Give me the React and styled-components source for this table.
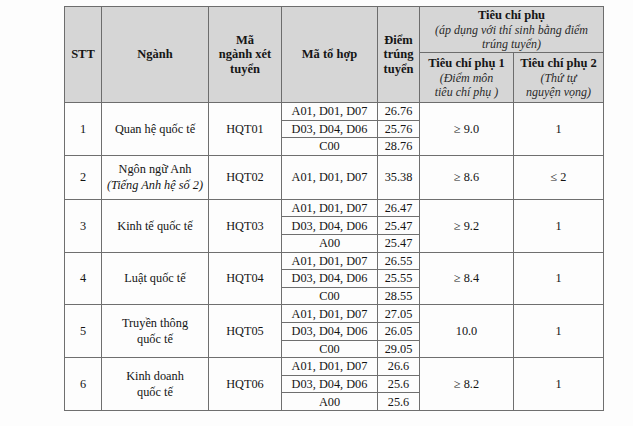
import React from 'react'
import styled, { createGlobalStyle } from 'styled-components'

const GlobalStyle = createGlobalStyle`
  body {
    margin: 0;
    background: #ffffff;
    font-family: "Liberation Serif", "Times New Roman", serif;
    color: #141414;
  }
`

const Page = styled.div`
  width: 633px;
  height: 426px;
  padding: 6px 0 0 64px;
  box-sizing: border-box;
  background: #fdfdfd;
`

const Table = styled.table`
  border-collapse: collapse;
  table-layout: fixed;
  width: 540px;
  border: 1px solid #777;
`

const HeadCell = styled.th`
  background: #d6d6d6;
  border: 1px solid #6d6d6d;
  font-size: 12.5px;
  font-weight: bold;
  line-height: 14.5px;
  text-align: center;
  vertical-align: middle;
  padding: 0 2px;
  color: #151515;
`

const Note = styled.span`
  display: block;
  font-weight: normal;
  font-style: italic;
  font-size: 12px;
  line-height: 14px;
  color: #2a2a2a;
`

const Cell = styled.td`
  border: 1px solid #6f6f6f;
  font-size: 12.3px;
  line-height: 16px;
  text-align: center;
  vertical-align: middle;
  padding: 0 2px;
  white-space: nowrap;
`

const Row = styled.tr`
  height: ${p => p.$h}px;
`

const Italic = styled.span`
  font-style: italic;
`

const widths = [37, 107, 73, 96, 42, 94, 90]

const groups = [
  {
    stt: '1', name: ['Quan hệ quốc tế'], code: 'HQT01', tc1: '≥ 9.0', tc2: '1',
    subs: [['A01, D01, D07', '26.76'], ['D03, D04, D06', '25.76'], ['C00', '28.76']],
  },
  {
    stt: '2', name: ['Ngôn ngữ Anh'], sub: '(Tiếng Anh hệ số 2)', code: 'HQT02', tc1: '≥ 8.6', tc2: '≤ 2',
    subs: [['A01, D01, D07', '35.38']],
  },
  {
    stt: '3', name: ['Kinh tế quốc tế'], code: 'HQT03', tc1: '≥ 9.2', tc2: '1',
    subs: [['A01, D01, D07', '26.47'], ['D03, D04, D06', '25.47'], ['A00', '25.47']],
  },
  {
    stt: '4', name: ['Luật quốc tế'], code: 'HQT04', tc1: '≥ 8.4', tc2: '1',
    subs: [['A01, D01, D07', '26.55'], ['D03, D04, D06', '25.55'], ['C00', '28.55']],
  },
  {
    stt: '5', name: ['Truyền thông', 'quốc tế'], code: 'HQT05', tc1: '10.0', tc2: '1',
    subs: [['A01, D01, D07', '27.05'], ['D03, D04, D06', '26.05'], ['C00', '29.05']],
  },
  {
    stt: '6', name: ['Kinh doanh', 'quốc tế'], code: 'HQT06', tc1: '≥ 8.2', tc2: '1',
    subs: [['A01, D01, D07', '26.6'], ['D03, D04, D06', '25.6'], ['A00', '25.6']],
  },
]

const Group = ({ g }) => {
  const span = g.subs.length
  const h = span === 1 ? 44 : 17.6
  return (
    <>
      {g.subs.map((s, i) => (
        <Row key={i} $h={h}>
          {i === 0 && (
            <>
              <Cell rowSpan={span}>{g.stt}</Cell>
              <Cell rowSpan={span}>
                {g.name.map((n, k) => <div key={k}>{n}</div>)}
                {g.sub && <Italic>{g.sub}</Italic>}
              </Cell>
              <Cell rowSpan={span}>{g.code}</Cell>
            </>
          )}
          <Cell>{s[0]}</Cell>
          <Cell>{s[1]}</Cell>
          {i === 0 && (
            <>
              <Cell rowSpan={span}>{g.tc1}</Cell>
              <Cell rowSpan={span}>{g.tc2}</Cell>
            </>
          )}
        </Row>
      ))}
    </>
  )
}

export default function App() {
  return (
    <Page>
      <GlobalStyle />
      <Table>
        <colgroup>
          {widths.map((w, i) => <col key={i} style={{ width: w }} />)}
        </colgroup>
        <thead>
          <Row $h={46}>
            <HeadCell rowSpan={2}>STT</HeadCell>
            <HeadCell rowSpan={2}>Ngành</HeadCell>
            <HeadCell rowSpan={2}>Mã<br />ngành xét<br />tuyển</HeadCell>
            <HeadCell rowSpan={2}>Mã tổ hợp</HeadCell>
            <HeadCell rowSpan={2}>Điểm<br />trúng<br />tuyển</HeadCell>
            <HeadCell colSpan={2}>
              Tiêu chí phụ
              <Note>(áp dụng với thí sinh bằng điểm<br />trúng tuyển)</Note>
            </HeadCell>
          </Row>
          <Row $h={50}>
            <HeadCell>
              Tiêu chí phụ 1
              <Note>(Điểm môn<br />tiêu chí phụ )</Note>
            </HeadCell>
            <HeadCell>
              Tiêu chí phụ 2
              <Note>(Thứ tự<br />nguyện vọng)</Note>
            </HeadCell>
          </Row>
        </thead>
        <tbody>
          {groups.map(g => <Group key={g.stt} g={g} />)}
        </tbody>
      </Table>
    </Page>
  )
}
